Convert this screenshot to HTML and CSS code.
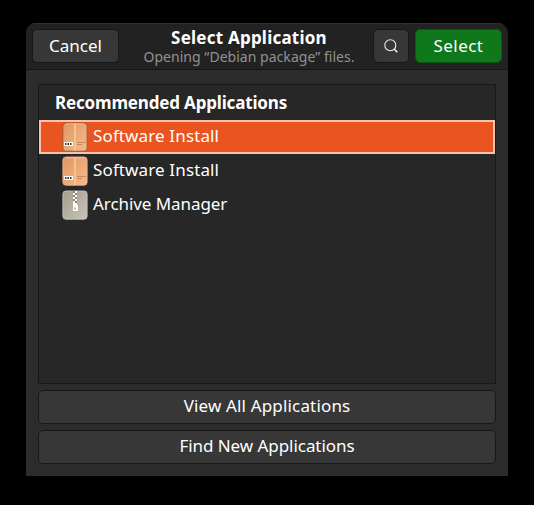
FILE: index.html
```
<!DOCTYPE html>
<html lang="en">
<head>
<meta charset="utf-8">
<title>Select Application</title>
<link rel="stylesheet" href="styles.css">
</head>
<body>
<svg width="0" height="0" class="defs" aria-hidden="true">
  <defs>
    <linearGradient id="box" x1="0" y1="0" x2="1" y2="1"><stop offset="0" stop-color="#e2975f"/><stop offset="1" stop-color="#f3bb92"/></linearGradient>
    <linearGradient id="zip" x1="0" y1="0" x2="1" y2="1"><stop offset="0" stop-color="#a39d8f"/><stop offset="1" stop-color="#c9c4b8"/></linearGradient>
    <symbol id="package" viewBox="0 0 26 30">
      <rect x=".9" y="1" width="24.2" height="28.2" rx="3" fill="url(#box)" stroke="currentColor" stroke-width=".9"/>
      <path d="M4 1.8h18" stroke="#f7c7a2" stroke-width=".8"/>
      <path d="M13 1.4v27.4" stroke="#f2cb8f" stroke-width="1.7"/>
      <path d="M2 20h9v4H2z" fill="#fff"/>
      <path d="M3 22h1.5M5.5 22H7M8 22h1.5" stroke="#333" stroke-width="2"/>
      <path d="M15 20.5h9M15 22.5h5" stroke="#c8754a" stroke-width=".7"/>
    </symbol>
    <symbol id="archive" viewBox="0 0 26 30">
      <rect x=".9" y="1" width="24.2" height="28.2" rx="3" fill="url(#zip)" stroke="#c9c4b9" stroke-width=".9"/>
      <path d="M13 1h2v2h-2zM11 3h2v2h-2zM13 5h2v2h-2zM11 7h2v2h-2zM13 9h2v2h-2zM11 11h2v2h2v2h1v6h-5z" fill="#fff"/>
      <path d="M11 1h2v2h-2zM13 3h2v2h-2zM11 5h2v2h-2zM13 7h2v2h-2zM11 9h2v2h-2zM13 11h2v2h-2z" fill="#8a8478"/>
      <path d="M13 17.5v2" stroke="#777166"/>
    </symbol>
  </defs>
</svg>
<main class="dialog">
  <header class="headerbar">
    <button class="btn cancel"><span>Cancel</span></button>
    <div class="titles">
      <h1>Select Application</h1>
      <p>Opening “Debian package” files.</p>
    </div>
    <button class="btn search" aria-label="Search">
      <svg width="16" height="16" viewBox="0 0 16 16" fill="none" stroke="#eee" stroke-width="1.1"><circle cx="7.3" cy="7.2" r="5.5"/><path d="M11.3 11.2l3 3" stroke-width="1.6"/></svg>
    </button>
    <button class="btn select"><span>Select</span></button>
  </header>
  <section class="content">
    <div class="list">
      <h2>Recommended Applications</h2>
      <div class="row selected"><svg class="icon"><use href="#package"/></svg><span class="install">Software Install</span></div>
      <div class="row"><svg class="icon"><use href="#package"/></svg><span class="install">Software Install</span></div>
      <div class="row"><svg class="icon"><use href="#archive"/></svg><span class="manager">Archive Manager</span></div>
    </div>
    <button class="btn wide"><span class="view">View All Applications</span></button>
    <button class="btn wide"><span class="find">Find New Applications</span></button>
  </section>
</main>
</body>
</html>
```
FILE: styles.css
```
* { box-sizing: border-box; }
body {
  margin: 0;
  height: 505px;
  padding: 23px 26px 29px;
  background: #000;
  color: #fff;
  font: 17px/22px "Noto Sans", "Open Sans", sans-serif;
  overflow: hidden;
  white-space: nowrap;
}
.defs { display: block; height: 0; }
.dialog {
  width: 482px;
  height: 453px;
  background: #2c2c2c;
  border-radius: 10px 10px 0 0;
  overflow: hidden;
}
.headerbar {
  display: flex;
  gap: 6px;
  height: 47px;
  padding: 6px 6px 0;
  background: #222;
  border-bottom: 1px solid #161616;
  box-shadow: inset 0 1px #2f2f2f;
}
.btn {
  display: flex;
  align-items: center;
  justify-content: center;
  height: 34px;
  padding: 0 0 1px;
  border: 1px solid #181818;
  border-radius: 5px;
  background: #373737;
  color: #fff;
  font: inherit;
}
.cancel { width: 87px; }
.search { width: 36px; }
.select { width: 87px; background: #0f781a; border-color: #0b5613; letter-spacing: .45px; }
.titles { flex: 1; text-align: center; margin-top: -2px; padding-left: 6px; }
h1 { margin: 0; font-size: 17px; line-height: 22px; font-weight: 700; letter-spacing: .22px; }
p { margin: 0; font-size: 14px; line-height: 15px; color: #919191; letter-spacing: .03px; }
.content { display: flex; flex-direction: column; gap: 6px; padding: 14px 12px 12px; }
.list { height: 300px; border: 1px solid #191919; background: #272727; }
h2 { margin: 0; height: 35px; padding-left: 16px; font-size: 17px; line-height: 36px; font-weight: 700; letter-spacing: -.17px; }
.row { display: flex; align-items: center; gap: 5px; height: 34px; padding-left: 23px; border: 2px solid transparent; border-width: 2px 0; }
.selected { background: #e95420; border: 2px solid #f8c4ae; padding-left: 21px; }
.icon { width: 26px; height: 30px; flex: none; color: #efb38b; }
.selected .icon { color: #9c5833; }
.row span { padding-bottom: 2px; }
.install { letter-spacing: .13px; }
.manager { letter-spacing: -.07px; }
.view { letter-spacing: .16px; }
.find { letter-spacing: -.05px; }
.wide { width: 100%; padding-bottom: 2px; }
```
